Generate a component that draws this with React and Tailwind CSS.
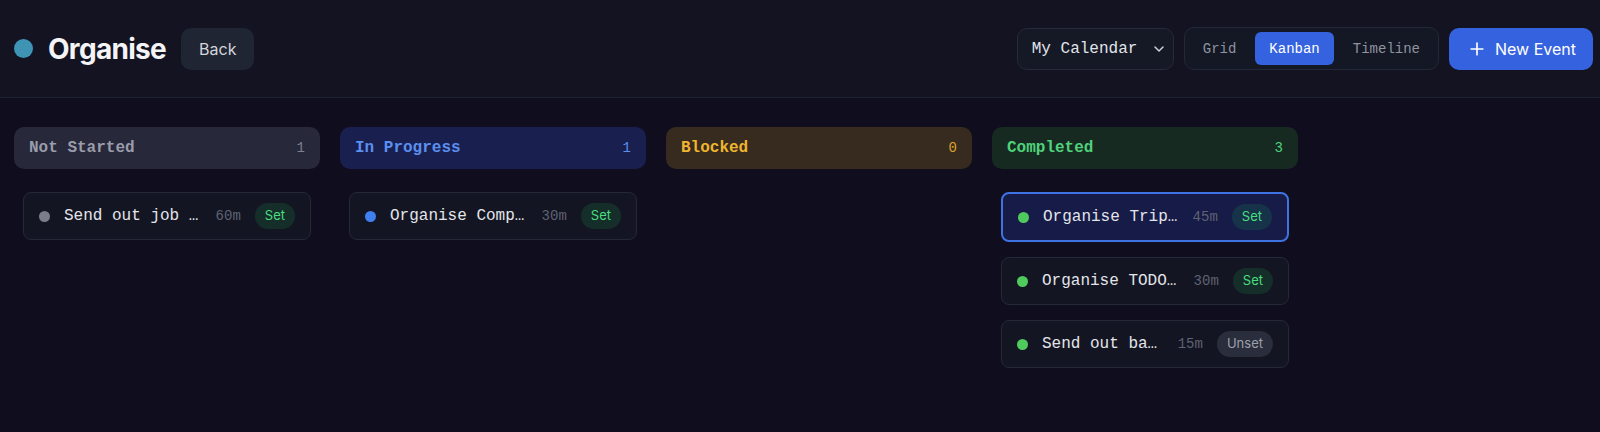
import { ChevronDown, Plus } from 'lucide-react';

const columns = [
  {
    id: 'not-started',
    title: 'Not Started',
    head: 'bg-[#27283a] text-[#9a9cab]',
    count: 'text-[#7d7f8e]',
    dot: 'bg-[#7b7d8b]',
    tasks: [{ id: 1, label: 'Send out job …', mins: 60, set: true }],
  },
  {
    id: 'in-progress',
    title: 'In Progress',
    head: 'bg-[#19204f] text-[#5b8ff0]',
    count: 'text-[#5b8ff0]',
    dot: 'bg-[#3f7ff0]',
    tasks: [{ id: 2, label: 'Organise Comp…', mins: 30, set: true }],
  },
  {
    id: 'blocked',
    title: 'Blocked',
    head: 'bg-[#372a1f] text-[#efb52f]',
    count: 'text-[#d9a32c]',
    dot: 'bg-[#efb52f]',
    tasks: [],
  },
  {
    id: 'completed',
    title: 'Completed',
    head: 'bg-[#172a22] text-[#4fd27a]',
    count: 'text-[#4fd27a]',
    dot: 'bg-[#4fcb5e]',
    tasks: [
      { id: 3, label: 'Organise Trip…', mins: 45, set: true, selected: true },
      { id: 4, label: 'Organise TODO…', mins: 30, set: true },
      { id: 5, label: 'Send out ba…', mins: 15, set: false },
    ],
  },
];

function TaskCard({ task, dot }) {
  return (
    <div
      className={`flex items-center gap-3.5 rounded-lg px-[15px] ${
        task.selected
          ? 'h-[50px] border-2 border-[#3f72e3] bg-[#161b47]'
          : 'h-[48px] border border-[#252838] bg-[#131522]'
      }`}
    >
      <span className={`h-[11px] w-[11px] shrink-0 rounded-full ${dot}`} />
      <span className="min-w-0 flex-1 whitespace-nowrap text-base text-[#e4e5ea]">{task.label}</span>
      <span className="shrink-0 text-sm text-[#5f6272]">{task.mins}m</span>
      {task.set ? (
        <span className="shrink-0 rounded-full bg-[#22c55e]/15 px-2.5 py-[3px] font-['Inter',sans-serif] text-[13px] text-[#4ade80]">
          Set
        </span>
      ) : (
        <span className="shrink-0 rounded-full bg-[#2a2d3b] px-2.5 py-[3px] font-['Inter',sans-serif] text-[13px] text-[#9ca0ad]">
          Unset
        </span>
      )}
    </div>
  );
}

export default function App() {
  return (
    <div className="min-h-screen w-full bg-[#100d1e] font-['Liberation_Mono',monospace]">
      {/* Top bar */}
      <header className="flex h-[98px] items-center justify-between border-b border-[#20222f] bg-[#131322] pl-[14px] pr-[7px]">
        <div className="flex items-center gap-[15px]">
          <span className="h-[19px] w-[19px] rounded-full bg-[#3f94b6]" />
          <h1 className="font-['Inter',sans-serif] text-[28px] font-bold tracking-tight text-[#f4f4f6]">Organise</h1>
          <button className="h-[42px] rounded-[10px] bg-[#1f2533] px-[18px] font-['Inter',sans-serif] text-base text-[#d3d5db]">
            Back
          </button>
        </div>

        <div className="flex items-center gap-2.5">
          <div className="flex h-[42px] w-[157px] items-center justify-between rounded-[10px] border border-[#262a39] bg-[#141925] pl-[14px] pr-[6px] text-base text-[#e2e4ea]">
            My Calendar
            <ChevronDown size={16} strokeWidth={2.2} className="text-[#cfd2da]" />
          </div>

          <div className="flex h-[43px] items-center gap-[5px] rounded-[10px] border border-[#232837] bg-[#131824] p-1 text-sm">
            <button className="h-[33px] rounded-md px-[14px] text-[#8f93a0]">Grid</button>
            <button className="h-[33px] rounded-md bg-[#3563e0] px-[14px] text-white">Kanban</button>
            <button className="h-[33px] rounded-md px-[14px] text-[#8f93a0]">Timeline</button>
          </div>

          <button className="flex h-[42px] items-center gap-2 rounded-[10px] bg-[#3563e0] pl-[18px] pr-[17px] font-['Inter',sans-serif] text-base text-white">
            <Plus size={20} strokeWidth={2} />
            New Event
          </button>
        </div>
      </header>

      {/* Board */}
      <main className="flex gap-5 px-[14px] pt-[29px]">
        {columns.map((col) => (
          <section key={col.id} className="flex w-[306px] flex-col">
            <div className={`flex h-[42px] items-center justify-between rounded-[10px] px-[15px] ${col.head}`}>
              <span className="text-base font-bold">{col.title}</span>
              <span className={`text-sm ${col.count}`}>{col.tasks.length}</span>
            </div>
            <div className="flex flex-col gap-[15px] px-[9px] pt-[23px]">
              {col.tasks.map((t) => (
                <TaskCard key={t.id} task={t} dot={col.dot} />
              ))}
            </div>
          </section>
        ))}
      </main>
    </div>
  );
}
